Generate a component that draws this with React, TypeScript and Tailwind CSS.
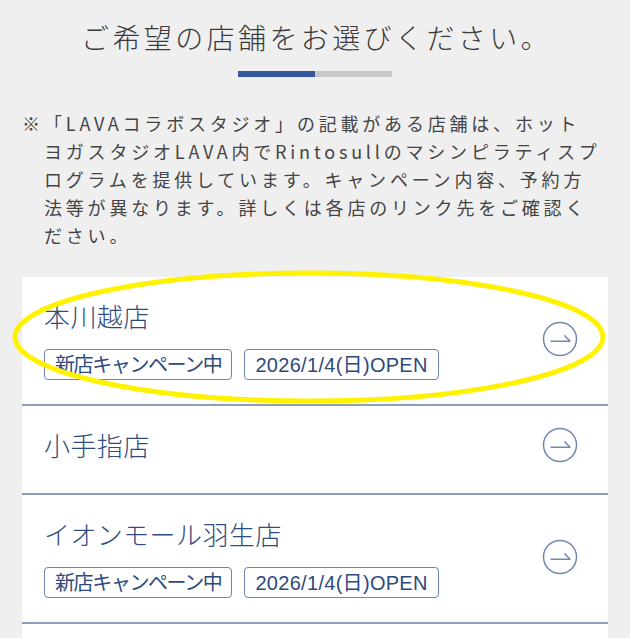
import type { ReactNode } from "react";

const jp = { fontFamily: '"Noto Sans CJK JP", "Noto Sans", sans-serif' };
const tagFont = { fontFamily: '"Liberation Sans", "Noto Sans CJK JP", sans-serif' };

const noteLines = [
  "「LAVAコラボスタジオ」の記載がある店舗は、ホット",
  "ヨガスタジオLAVA内でRintosullのマシンピラティスプ",
  "ログラムを提供しています。キャンペーン内容、予約方",
  "法等が異なります。詳しくは各店のリンク先をご確認く",
  "ださい。",
];

type Shop = { name: string; tags: boolean };

const shops: Shop[] = [
  { name: "本川越店", tags: true },
  { name: "小手指店", tags: false },
  { name: "イオンモール羽生店", tags: true },
  { name: "", tags: false },
];

function ArrowCircle() {
  return (
    <svg width="36" height="36" viewBox="0 0 36 36" fill="none" className="shrink-0">
      <circle cx="18" cy="18" r="16.5" stroke="#6f88b3" strokeWidth="1.5" />
      <path d="M9 20.3H28L22.7 14.7" stroke="#6f88b3" strokeWidth="1.5" strokeLinecap="round" strokeLinejoin="round" />
    </svg>
  );
}

function Tag({ children, className }: { children: ReactNode; className?: string }) {
  return (
    <span
      style={tagFont}
      className={`flex h-[31px] items-center rounded-[4px] border-[1.5px] border-[#6c84b0] px-[10px] text-[20px] leading-none text-[#2d4a7c] ${className ?? ""}`}
    >
      {children}
    </span>
  );
}

function ShopCard({ shop }: { shop: Shop }) {
  if (!shop.name) return <div className="h-[40px] bg-white" />;
  return (
    <div
      className={`flex items-center justify-between border-b-2 border-[#8e9dbb] bg-white pl-[22px] pr-[30px] pt-[21px] ${
        shop.tags ? "pb-[24px]" : "pb-[30px]"
      }`}
    >
      <div className="flex flex-col">
        <div style={jp} className="text-[26px] font-light leading-[36px] tracking-[0.4px] text-[#2f4c7f]">
          {shop.name}
        </div>
        {shop.tags && (
          <div className="mt-[15px] flex gap-[12px]">
            <Tag className="tracking-[-1.4px]">新店キャンペーン中</Tag>
            <Tag className="tracking-[0.3px]">2026/1/4(日)OPEN</Tag>
          </div>
        )}
      </div>
      <ArrowCircle />
    </div>
  );
}

export default function App() {
  return (
    <div className="relative h-[638px] w-full overflow-hidden bg-[#efefef]">
      <div className="flex flex-col items-center pt-[17px]">
        <h1 style={jp} className="pl-[3px] text-[28px] font-light leading-[40px] tracking-[3.4px] text-[#3a3a3a]">
          ご希望の店舗をお選びください。
        </h1>
        <div className="mt-[14px] flex h-[6px] w-[154px]">
          <div className="w-1/2 bg-[#34599f]" />
          <div className="w-1/2 bg-[#c9c9c9]" />
        </div>
      </div>

      <div style={jp} className="mt-[32px] flex px-[22px] text-[18px] leading-[28px] tracking-[3.8px] text-[#444]">
        <span className="w-[22px] shrink-0">※</span>
        <div className="flex flex-col whitespace-nowrap">
          {noteLines.map((l) => (
            <span key={l}>{l}</span>
          ))}
        </div>
      </div>

      <div className="mx-[22px] mt-[28px] flex flex-col">
        {shops.map((s, i) => (
          <ShopCard key={i} shop={s} />
        ))}
      </div>

      {/* annotation drawn over the first shop */}
      <svg className="pointer-events-none absolute left-0 top-0" width="630" height="638">
        <ellipse cx="309" cy="337" rx="294" ry="64" fill="none" stroke="#fff200" strokeWidth="5" />
      </svg>
    </div>
  );
}
